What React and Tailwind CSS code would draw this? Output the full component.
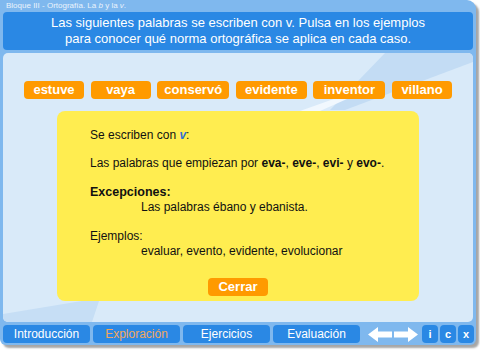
import React from 'react';

const words = [
    { t: 'estuve', w: 'w-[60px]' },
    { t: 'vaya', w: 'w-[60px]' },
    { t: 'conservó', w: 'w-[72px]' },
    { t: 'evidente', w: 'w-[71px]' },
    { t: 'inventor', w: 'w-[72px]' },
    { t: 'villano', w: 'w-[60px]' },
];

const tabs = [
    { t: 'Introducción', active: false },
    { t: 'Exploración', active: true },
    { t: 'Ejercicios', active: false },
    { t: 'Evaluación', active: false },
];

const Decor = () => (
    <svg className="absolute inset-0" width="470" height="269" viewBox="0 0 470 269">
        <polygon points="382,0 470,0 470,9 342,57 327,57" fill="#c3dcf4" />
        <polygon points="342,42 353,42 317,58 297,58" fill="#f1f8fe" />
        <polygon points="0,261 97,245 89,269 0,269" fill="#c6def5" />
    </svg>
);

const Arrows = () => (
    <svg width="50" height="15" viewBox="0 0 50 15">
        <polygon points="0,7.5 10,0 10,4.5 24,4.5 24,10.5 10,10.5 10,15" fill="#ffffff" />
        <polygon points="50,7.5 40,0 40,4.5 26,4.5 26,10.5 40,10.5 40,15" fill="#ffffff" />
    </svg>
);

export default function App() {
    return (
        <div className="w-[480px] h-[351px] bg-white font-['Liberation_Sans',Arial,sans-serif]">
            <div className="w-[476px] h-[345px] bg-[#7fb8ee] rounded-tr-[9px] rounded-b-[6px] shadow-[3px_3px_2px_rgba(0,0,0,0.35)] flex flex-col px-[3px]">
                {/* title */}
                <div className="h-[12px] pl-[3px] text-[8px] leading-[12px] text-[#eaf3fc]">
                    Bloque III - Ortografía. La <i>b</i> y la <i>v</i>.
                </div>

                {/* header */}
                <div className="h-[38px] bg-[#2a88e4] rounded-[4px] flex flex-col justify-center items-center text-white text-[13px] leading-[16px]">
                    <span>Las siguientes palabras se escriben con v. Pulsa en los ejemplos</span>
                    <span>para conocer qué norma ortográfica se aplica en cada caso.</span>
                </div>

                {/* content */}
                <div className="relative mt-[3px] h-[269px] bg-[#d9eaf9] rounded-[5px] overflow-hidden">
                    <Decor />
                    <div className="relative flex flex-col items-center pt-[28px]">
                        <div className="flex gap-[6.6px]">
                            {words.map((w) => (
                                <button
                                    key={w.t}
                                    className={`${w.w} h-[18px] bg-[#ff9a00] rounded-[4px] text-white font-bold text-[13px] leading-[18px] text-center`}
                                >
                                    {w.t}
                                </button>
                            ))}
                        </div>

                        <div className="mt-[12px] w-[362px] h-[190px] bg-[#ffed50] rounded-[8px] pt-[17px] pl-[33px] text-[12px] leading-[15px] text-[#111]">
                            <p>
                                Se escriben con <b className="italic text-[#2f6fd6]">v</b>:
                            </p>
                            <p className="mt-[13px]">
                                Las palabras que empiezan por <b>eva-</b>, <b>eve-</b>, <b>evi-</b> y <b>evo-</b>.
                            </p>
                            <p className="mt-[14px] font-bold text-[12.5px]">Excepciones:</p>
                            <p className="pl-[51px]">Las palabras ébano y ebanista.</p>
                            <p className="mt-[14px]">Ejemplos:</p>
                            <p className="pl-[51px]">evaluar, evento, evidente, evolucionar</p>
                            <div className="flex justify-center pr-[33px] mt-[19px]">
                                <button className="w-[60px] h-[18px] bg-[#ff9a00] rounded-[4px] text-white font-bold text-[13px] leading-[18px]">
                                    Cerrar
                                </button>
                            </div>
                        </div>
                    </div>
                </div>

                {/* bottom nav */}
                <div className="mt-[3px] h-[18px] flex items-center">
                    <div className="flex gap-[3px]">
                        {tabs.map((t) => (
                            <button
                                key={t.t}
                                className={`w-[87px] h-[18px] bg-[#2a88e4] rounded-[4px] text-[12px] leading-[18px] ${t.active ? 'text-[#f2a75c]' : 'text-white'}`}
                            >
                                {t.t}
                            </button>
                        ))}
                    </div>
                    <div className="ml-[8px] flex items-center">
                        <Arrows />
                    </div>
                    <div className="ml-[4px] flex gap-[2px]">
                        {['i', 'c', 'x'].map((l) => (
                            <button
                                key={l}
                                className="w-[16px] h-[18px] bg-[#2a88e4] rounded-[4px] text-white font-bold text-[11px] leading-[18px]"
                            >
                                {l}
                            </button>
                        ))}
                    </div>
                </div>
            </div>
        </div>
    );
}
